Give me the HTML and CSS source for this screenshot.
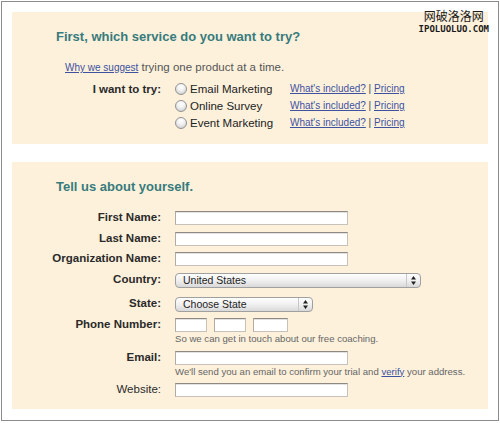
FILE: index.html
```html
<!DOCTYPE html>
<html lang="en">
  <head>
    <meta charset="utf-8" />
    <title>Start your free trial</title>
    <link rel="stylesheet" href="styles.css">
  </head>
  <body>
    <div class="frame">
      <div class="watermark">
        <span class="wm-cn">网破洛洛网</span>
        <span class="wm-en">ipoluoluo.com</span>
      </div>

      <section class="panel">
        <h2>First, which service do you want to try?</h2>
        <p class="suggest"><a href="#">Why we suggest</a> trying one product at a time.</p>
        <div class="services">
          <span class="try-label">I want to try:</span>
          <label class="option"><input type="radio" name="service" /> Email Marketing</label>
          <span class="more"><a href="#">What's included?</a> | <a href="#">Pricing</a></span>
          <label class="option"><input type="radio" name="service" /> Online Survey</label>
          <span class="more"><a href="#">What's included?</a> | <a href="#">Pricing</a></span>
          <label class="option"><input type="radio" name="service" /> Event Marketing</label>
          <span class="more"><a href="#">What's included?</a> | <a href="#">Pricing</a></span>
        </div>
      </section>

      <section class="panel about">
        <h2>Tell us about yourself.</h2>
        <div class="fields">
          <label>First Name:</label>
          <div><input class="text" type="text" /></div>

          <label>Last Name:</label>
          <div><input class="text" type="text" /></div>

          <label>Organization Name:</label>
          <div><input class="text" type="text" /></div>

          <label>Country:</label>
          <div class="select country">
            <span class="value">United States</span>
            <span class="arrows">
              <svg width="5" height="9" viewBox="0 0 5 9"><path d="M2.5 0L5 3.5H0z M2.5 9L0 5.5H5z" fill="#222"/></svg>
            </span>
          </div>

          <label>State:</label>
          <div class="select state">
            <span class="value">Choose State</span>
            <span class="arrows">
              <svg width="5" height="9" viewBox="0 0 5 9"><path d="M2.5 0L5 3.5H0z M2.5 9L0 5.5H5z" fill="#222"/></svg>
            </span>
          </div>

          <label>Phone Number:</label>
          <div>
            <div class="phone">
              <input class="text area" type="text" />
              <input class="text area" type="text" />
              <input class="text line" type="text" />
            </div>
            <p class="help">So we can get in touch about our free coaching.</p>
          </div>

          <label>Email:</label>
          <div>
            <input class="text" type="text" />
            <p class="help">We'll send you an email to confirm your trial and <a href="#">verify</a> your address.</p>
          </div>

          <label class="plain">Website:</label>
          <div><input class="text" type="text" /></div>
        </div>
      </section>
    </div>
  </body>
</html>
```

FILE: styles.css
```css
body {
  margin: 0;
  font-family: "Liberation Sans", Arial, sans-serif;
  color: #333;
  background: #fff;
}

.frame {
  position: relative;
  margin: 1px;
  border: 1px solid #8c8c8c;
  padding: 10px 10px 11px 10px;
  display: flex;
  flex-direction: column;
  gap: 18px;
}

.watermark {
  position: absolute;
  top: 8px;
  right: 9px;
  display: flex;
  flex-direction: column;
  align-items: center;
  line-height: 1;
  color: #1a1a1a;
}
.wm-cn {
  font-family: "Noto Sans CJK SC", sans-serif;
  font-size: 12px;
}
.wm-en {
  margin-top: 3px;
  font-family: "DejaVu Sans Mono", monospace;
  font-size: 9px;
  font-weight: bold;
  text-transform: uppercase;
}

.panel {
  background-color: #fdf1dc;
  padding: 17px 0 13px 0;
}
.panel h2 {
  margin: 0 0 0 44px;
  font-size: 13px;
  line-height: 16px;
  color: #377b7c;
}

a {
  color: #3e52a0;
}

.suggest {
  margin: 15px 0 5px 53px;
  font-size: 11.5px;
  line-height: 14px;
  color: #555;
}
.suggest a {
  font-size: 10px;
}

.services {
  display: grid;
  grid-template-columns: 163px 115px auto;
  grid-auto-rows: 17px;
  align-items: center;
}
.try-label {
  grid-row: 1;
  grid-column: 1;
  padding-right: 14px;
  text-align: right;
  font-size: 11.5px;
  font-weight: bold;
  color: #2a2a2a;
}
.option {
  grid-column: 2;
  display: flex;
  align-items: center;
  font-size: 11.5px;
  color: #222;
}
.option input {
  appearance: none;
  width: 12px;
  height: 12px;
  margin: 0 3px 0 0;
  border: 1px solid #939393;
  border-radius: 50%;
  background: radial-gradient(circle at 50% 30%, #fff 0, #f2f2f2 40%, #c4c4c4 100%);
}
.more {
  font-size: 10px;
  color: #444;
}

.about {
  padding-bottom: 12px;
}
.fields {
  display: grid;
  grid-template-columns: 163px auto;
  row-gap: 6.5px;
  margin-top: 16px;
  align-items: start;
}
.fields label {
  padding-right: 14px;
  text-align: right;
  font-size: 11.5px;
  font-weight: bold;
  line-height: 13px;
  color: #2a2a2a;
}
.fields label.plain {
  font-weight: normal;
}

.text {
  display: block;
  box-sizing: border-box;
  width: 173px;
  height: 14px;
  margin: 0;
  padding: 0 2px;
  border: 1px solid #c6c2ba;
  border-top-color: #8e8a83;
  border-left-color: #b0aca4;
  background: #fff;
  box-shadow: inset 0 1px 0 #e2e2e2;
}

.phone {
  display: flex;
  gap: 7px;
}
.phone .area {
  width: 32px;
}
.phone .line {
  width: 35px;
}

.help {
  margin: 2px 0 0 0;
  font-size: 9.6px;
  line-height: 10px;
  color: #666;
}

.select {
  position: relative;
  box-sizing: border-box;
  height: 15px;
  padding-left: 7px;
  border: 1px solid #a0a0a0;
  border-radius: 4px;
  background: linear-gradient(#fefefe, #f0f0f0 50%, #d9d9d9);
  font-size: 10.5px;
  line-height: 13px;
  color: #1e1e1e;
}
.select.country {
  width: 246px;
  margin-bottom: 2.5px;
}
.select.state {
  width: 138px;
}
.arrows {
  position: absolute;
  top: 0;
  right: 0;
  bottom: 0;
  width: 13px;
  border-left: 1px solid #c8c8c8;
  display: flex;
  align-items: center;
  justify-content: center;
}
.arrows svg {
  display: block;
}
```
